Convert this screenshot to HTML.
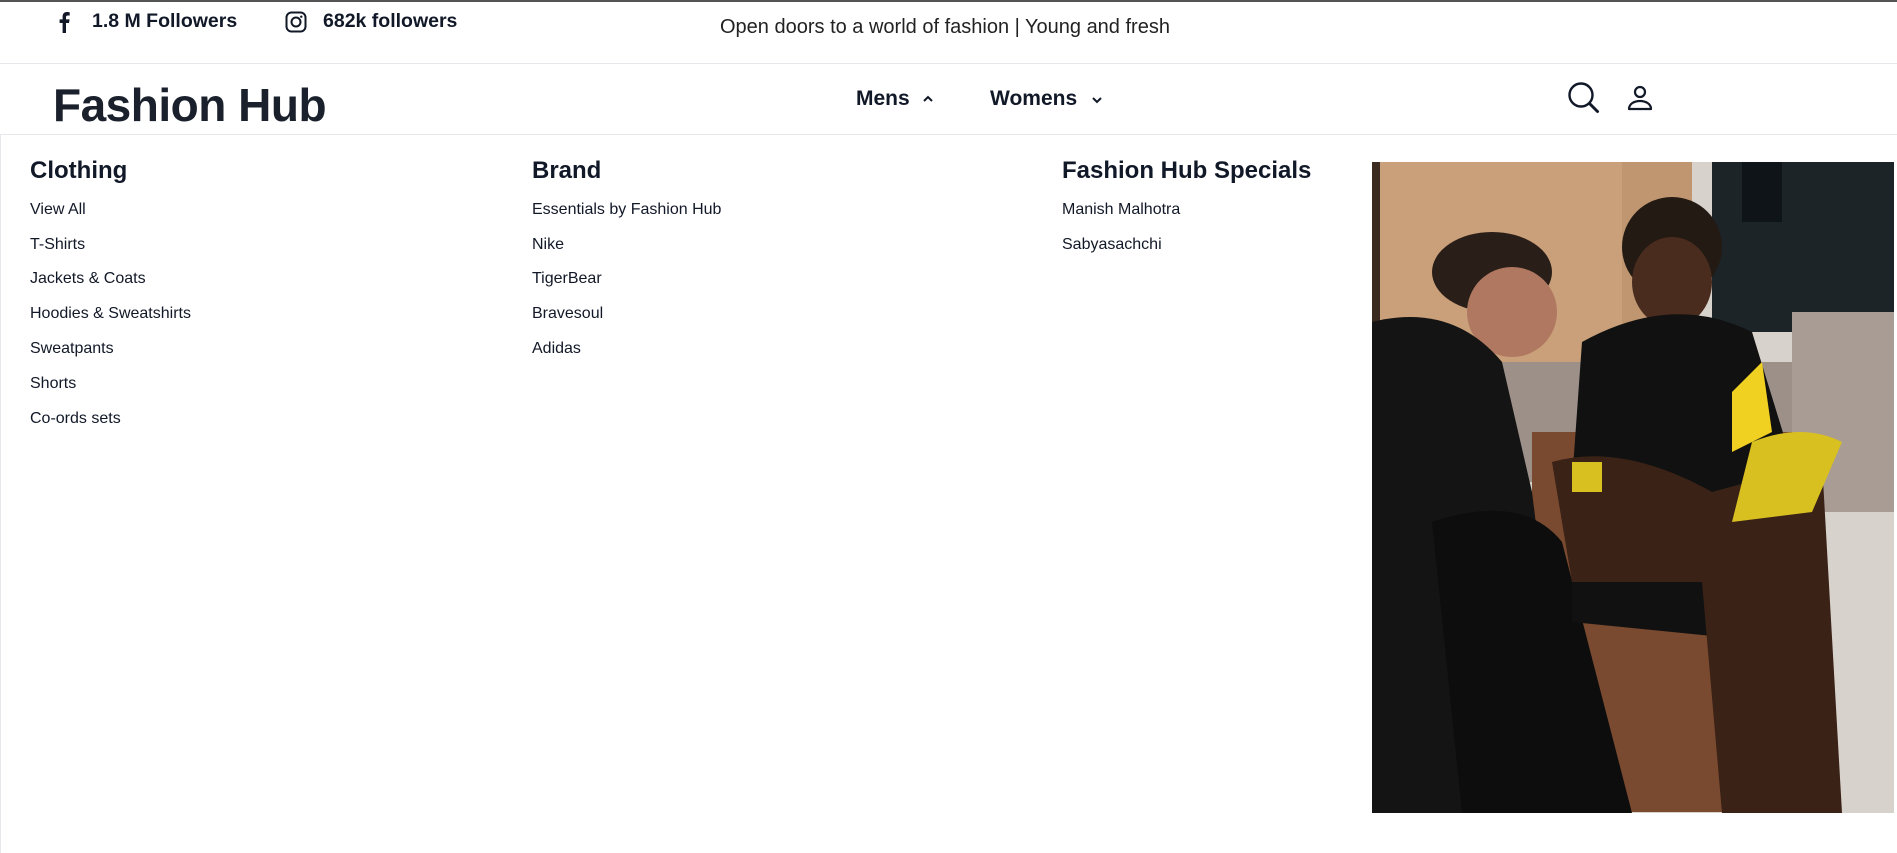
<!DOCTYPE html>
<html><head><meta charset="utf-8"><style>
*{margin:0;padding:0;box-sizing:border-box}
body{width:1897px;height:853px;background:#fff;font-family:"Liberation Sans",Arial,sans-serif;color:#111827;position:relative;overflow:hidden}
.a{position:absolute;white-space:nowrap}
.top{position:absolute;left:0;top:0;width:1897px;height:2px;background:#555}
.hl{position:absolute;left:0;width:1897px;height:1px;background:#e5e7eb}
.h{font-size:24px;font-weight:700;color:#111827}
.i{font-size:16px;color:#111827}
</style></head><body>
<div class="top"></div>
<svg class="a" style="left:57px;top:11px" width="14" height="22" viewBox="0 0 14 22"><path d="M9 22V12h3l.6-3.6H9V6.3c0-1 .4-1.8 1.9-1.8h1.8V1.3C12.3 1.2 11.2 1 10 1 7.4 1 5.6 2.6 5.6 5.5v2.9H2.6V12h3v10z" fill="#111827"/></svg>
<div class="a" style="left:92px;top:10px;font-size:19.5px;font-weight:700">1.8 M Followers</div>
<svg class="a" style="left:285px;top:11px" width="22" height="22" viewBox="0 0 22 22"><rect x="1.5" y="1.5" width="19" height="19" rx="5" fill="none" stroke="#111827" stroke-width="2"/><circle cx="11" cy="11" r="4.5" fill="none" stroke="#111827" stroke-width="2"/><circle cx="16.3" cy="5.7" r="1.2" fill="#111827"/></svg>
<div class="a" style="left:323px;top:10px;font-size:19.5px;font-weight:700">682k followers</div>
<div class="a" style="left:720px;top:16px;font-size:20px;color:#222">Open doors to a world of fashion | Young and fresh</div>
<div class="hl" style="top:63px"></div>
<div class="a" style="left:53px;top:78px;font-size:46px;font-weight:700;letter-spacing:-0.5px;color:#1a202c">Fashion Hub</div>
<div class="a" style="left:856px;top:87px;font-size:21px;font-weight:700">Mens</div>
<svg class="a" style="left:922px;top:95px" width="12" height="8" viewBox="0 0 12 8"><path d="M2 6l4-4 4 4" fill="none" stroke="#111827" stroke-width="2"/></svg>
<div class="a" style="left:990px;top:87px;font-size:21px;font-weight:700">Womens</div>
<svg class="a" style="left:1091px;top:96px" width="12" height="8" viewBox="0 0 12 8"><path d="M2 2l4 4 4-4" fill="none" stroke="#111827" stroke-width="2"/></svg>
<svg class="a" style="left:1567px;top:81px" width="36" height="34" viewBox="0 0 36 34"><circle cx="14" cy="14" r="11.5" fill="none" stroke="#111827" stroke-width="2.4"/><path d="M22.5 22.5l8 8" stroke="#111827" stroke-width="3" stroke-linecap="round"/></svg>
<svg class="a" style="left:1626px;top:84px" width="28" height="28" viewBox="0 0 28 28"><circle cx="14" cy="8" r="5" fill="none" stroke="#111827" stroke-width="2.2"/><path d="M3 25c0-5 5-8 11-8s11 3 11 8z" fill="none" stroke="#111827" stroke-width="2.2" stroke-linejoin="round"/></svg>
<div class="hl" style="top:134px"></div>
<div class="a" style="left:0;top:134px;width:1px;height:719px;background:#e5e7eb"></div>
<div class="a h" style="left:30px;top:157px">Clothing</div>
<div class="a i" style="left:30px;top:201px">View All</div>
<div class="a i" style="left:30px;top:236px">T-Shirts</div>
<div class="a i" style="left:30px;top:270px">Jackets &amp; Coats</div>
<div class="a i" style="left:30px;top:305px">Hoodies &amp; Sweatshirts</div>
<div class="a i" style="left:30px;top:340px">Sweatpants</div>
<div class="a i" style="left:30px;top:375px">Shorts</div>
<div class="a i" style="left:30px;top:410px">Co-ords sets</div>
<div class="a h" style="left:532px;top:157px">Brand</div>
<div class="a i" style="left:532px;top:201px">Essentials by Fashion Hub</div>
<div class="a i" style="left:532px;top:236px">Nike</div>
<div class="a i" style="left:532px;top:270px">TigerBear</div>
<div class="a i" style="left:532px;top:305px">Bravesoul</div>
<div class="a i" style="left:532px;top:340px">Adidas</div>
<div class="a h" style="left:1062px;top:157px">Fashion Hub Specials</div>
<div class="a i" style="left:1062px;top:201px">Manish Malhotra</div>
<div class="a i" style="left:1062px;top:236px">Sabyasachchi</div>
<svg class="a" style="left:1372px;top:162px" width="522" height="651" viewBox="0 0 522 651">
<rect width="522" height="651" fill="#d8d2cc"/>
<rect x="0" y="0" width="320" height="250" fill="#c9a07a"/>
<rect x="250" y="0" width="70" height="200" fill="#bf9670"/>
<rect x="0" y="0" width="8" height="160" fill="#3a2a20"/>
<rect x="130" y="200" width="360" height="120" fill="#9c9088"/>
<rect x="160" y="270" width="280" height="380" fill="#7a4a30"/>
<rect x="340" y="0" width="182" height="170" fill="#1c2428"/>
<rect x="420" y="150" width="102" height="200" fill="#a89c94"/>
<ellipse cx="120" cy="110" rx="60" ry="40" fill="#2a1e18"/>
<ellipse cx="140" cy="150" rx="45" ry="45" fill="#b07860"/>
<path d="M0 160 Q80 140 130 200 L160 330 L200 651 L0 651Z" fill="#141414"/>
<path d="M60 360 Q150 330 190 380 L260 651 L90 651Z" fill="#0d0d0d"/>
<ellipse cx="300" cy="85" rx="50" ry="50" fill="#231a14"/>
<ellipse cx="300" cy="120" rx="40" ry="45" fill="#4a2c1e"/>
<path d="M210 180 Q300 130 380 170 L420 300 L400 480 L200 460 L200 320Z" fill="#111"/>
<path d="M180 300 Q250 280 340 330 L450 300 L470 651 L350 651 L330 420 L200 420Z" fill="#3a2216"/>
<path d="M360 230 L390 200 L400 270 L360 290Z" fill="#f0d020"/>
<path d="M380 280 Q430 260 470 280 L440 350 L360 360Z" fill="#d8c020"/>
<rect x="200" y="300" width="30" height="30" fill="#d8c020"/>
<rect x="370" y="0" width="40" height="60" fill="#0e1418"/>
</svg>
</body></html>
